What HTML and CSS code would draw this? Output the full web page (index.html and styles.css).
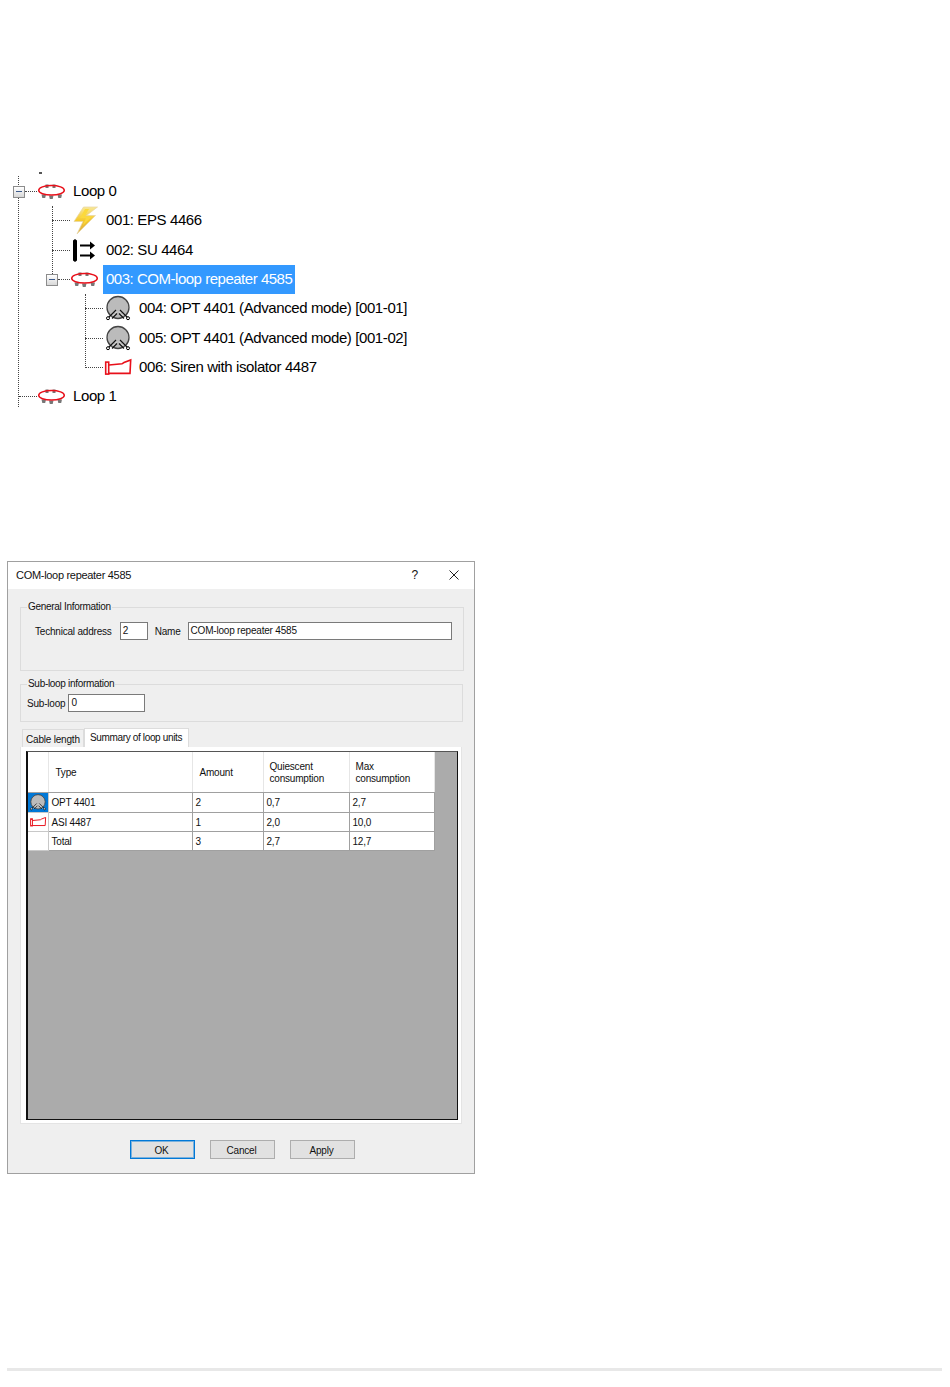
FILE: index.html
```html
<!DOCTYPE html>
<html lang="en">
	<head>
		<meta charset="UTF-8" />
		<title>COM-loop repeater 4585</title>
		<link rel="stylesheet" href="styles.css">
	</head>
	<body>
		<svg class="sprite" aria-hidden="true">
			<defs>
				<linearGradient id="bolt" x1="0" y1="0" x2="0" y2="1">
					<stop offset="0" stop-color="#f8e89a" />
					<stop offset="0.5" stop-color="#f5c92c" />
					<stop offset="1" stop-color="#d9a94e" />
				</linearGradient>
			</defs>
			<symbol id="icon-loop" viewBox="0 0 30 16">
				<g fill="#777">
					<rect x="8.5" y="1" width="3" height="3.5" />
					<rect x="15.5" y="1" width="3" height="3.5" />
					<path d="M4.5 11h4.5l-.8 3.5h-2.9zM12 12h4.5l-.8 3.5h-2.9zM20.5 11h4.5l-.8 3.5h-2.9z" />
				</g>
				<ellipse cx="14.5" cy="6.8" rx="12.8" ry="4.8" fill="none" stroke="#e8101a" stroke-width="1.5" />
			</symbol>
			<symbol id="icon-bolt" viewBox="0 0 30 29">
				<polygon points="27.5,1 13.5,1 4,15.5 13,15.5 7,28 25.5,9.5 16.5,9.5" fill="url(#bolt)" stroke="#e6d6a4" stroke-width="0.7" />
				<polygon points="15,3 10,12 16,12 13,19 22,10.5 14.5,10.5 19,3" fill="#fbd93c" />
			</symbol>
			<symbol id="icon-su" viewBox="0 0 30 29">
				<path d="M5 3l2 1.5v20l-2 1.5-2-1.5v-20z" fill="#000" />
				<path d="M10 9.5h11M10 19.5h11" stroke="#000" stroke-width="2" fill="none" />
				<path d="M20 5.5l5 4-5 4zM20 15.5l5 4-5 4z" fill="#000" />
			</symbol>
			<symbol id="icon-opt" viewBox="0 0 30 29">
				<circle cx="15" cy="13.5" r="11" fill="#bbb" stroke="#444" stroke-width="1.3" />
				<path d="M5.5 23.5l7.5-7.5M24.5 23.5l-7.5-7.5M9 24.5l5-5M21 24.5l-5-5" stroke="#111" stroke-width="1.1" fill="none" />
				<path d="M7.5 24l6.5-6.5M22.5 24l-6.5-6.5" stroke="#eee" stroke-width="0.8" stroke-dasharray="2 1.5" fill="none" />
				<circle cx="5" cy="24.2" r="1.5" fill="#fff" stroke="#000" />
				<circle cx="25" cy="24.2" r="1.5" fill="#fff" stroke="#000" />
			</symbol>
			<symbol id="icon-siren" viewBox="0 0 30 20">
				<rect x="2.7" y="4.6" width="3" height="12" fill="#fff" stroke="#e8101a" stroke-width="1.6" />
				<path d="M6 7.5l13-1.2 2-1.3 6.7-2.6-.7 13.5H6" fill="none" stroke="#e8101a" stroke-width="1.6" />
			</symbol>
		</svg>

		<div class="tree">
			<span class="speck"></span>
			<span class="branch branch-root"></span>
			<span class="branch branch-loop"></span>
			<span class="branch branch-sub"></span>
			<div class="row level-0">
				<span class="expander"></span><span class="twig"></span>
				<svg class="icon"><use href="#icon-loop" /></svg>
				<span class="label">Loop 0</span>
			</div>
			<div class="row level-1 leaf">
				<span class="twig"></span>
				<svg class="icon"><use href="#icon-bolt" /></svg>
				<span class="label">001: EPS 4466</span>
			</div>
			<div class="row level-1 leaf">
				<span class="twig"></span>
				<svg class="icon"><use href="#icon-su" /></svg>
				<span class="label">002: SU 4464</span>
			</div>
			<div class="row level-1">
				<span class="expander"></span><span class="twig"></span>
				<svg class="icon"><use href="#icon-loop" /></svg>
				<span class="label selected">003: COM-loop repeater 4585</span>
			</div>
			<div class="row level-2 leaf">
				<span class="twig"></span>
				<svg class="icon"><use href="#icon-opt" /></svg>
				<span class="label">004: OPT 4401 (Advanced mode) [001-01]</span>
			</div>
			<div class="row level-2 leaf">
				<span class="twig"></span>
				<svg class="icon"><use href="#icon-opt" /></svg>
				<span class="label">005: OPT 4401 (Advanced mode) [001-02]</span>
			</div>
			<div class="row level-2 leaf">
				<span class="twig"></span>
				<svg class="icon"><use href="#icon-siren" /></svg>
				<span class="label">006: Siren with isolator 4487</span>
			</div>
			<div class="row level-0 leaf">
				<span class="twig"></span>
				<svg class="icon"><use href="#icon-loop" /></svg>
				<span class="label">Loop 1</span>
			</div>
		</div>

		<div class="dialog">
			<div class="titlebar">
				<span class="title">COM-loop repeater 4585</span>
				<span class="help">?</span>
				<svg class="close" viewBox="0 0 10 10"><path d="M0.5 0.5l9 9M9.5 0.5l-9 9" stroke="#222" fill="none" /></svg>
			</div>
			<div class="dialog-body">
				<fieldset class="group group-general">
					<legend>General Information</legend>
					<div class="fields">
						<label>Technical address</label>
						<span class="input input-address">2</span>
						<label>Name</label>
						<span class="input input-name">COM-loop repeater 4585</span>
					</div>
				</fieldset>
				<fieldset class="group group-sub">
					<legend>Sub-loop information</legend>
					<div class="fields">
						<label>Sub-loop</label>
						<span class="input input-sub">0</span>
					</div>
				</fieldset>

				<div class="tabs">
					<span class="tab">Cable length</span>
					<span class="tab active">Summary of loop units</span>
				</div>
				<div class="panel">
					<div class="grid">
						<table>
							<colgroup>
								<col class="col-head">
								<col class="col-type">
								<col class="col-amount">
								<col class="col-value">
								<col class="col-max">
							</colgroup>
							<thead>
								<tr>
									<th></th>
									<th>Type</th>
									<th>Amount</th>
									<th>Quiescent<br>consumption</th>
									<th>Max<br>consumption</th>
								</tr>
							</thead>
							<tbody>
								<tr>
									<td class="rowhead current"><svg class="icon-opt"><use href="#icon-opt" /></svg></td>
									<td>OPT 4401</td><td>2</td><td>0,7</td><td>2,7</td>
								</tr>
								<tr>
									<td class="rowhead"><svg class="icon-siren"><use href="#icon-siren" /></svg></td>
									<td>ASI 4487</td><td>1</td><td>2,0</td><td>10,0</td>
								</tr>
								<tr>
									<td class="rowhead"></td>
									<td>Total</td><td>3</td><td>2,7</td><td>12,7</td>
								</tr>
							</tbody>
						</table>
					</div>
				</div>

				<div class="buttons">
					<button class="default">OK</button>
					<button>Cancel</button>
					<button>Apply</button>
				</div>
			</div>
		</div>

		<div class="page-rule"></div>
	</body>
</html>
```

FILE: styles.css
```css
* {
	box-sizing: border-box;
	margin: 0;
	padding: 0;
}
body {
	background-color: #fff;
	color: #111;
	font-family: "Liberation Sans", Arial, sans-serif;
	width: 950px;
	height: 1387px;
	overflow: hidden;
	padding-top: 177px;
}
.sprite {
	position: absolute;
	width: 0;
	height: 0;
}

/* tree */
.tree {
	position: relative;
	height: 235px;
	font-size: 15px;
	letter-spacing: -0.4px;
	color: #000;
}
.speck {
	position: absolute;
	left: 39px;
	top: -5px;
	width: 3px;
	height: 2px;
	background-color: #555;
}
.branch {
	position: absolute;
	border-left: 1px dotted #444;
}
.branch-root {
	left: 18px;
	top: -1px;
	height: 231px;
}
.branch-loop {
	left: 52px;
	top: 29px;
	height: 74px;
}
.branch-sub {
	left: 85px;
	top: 117px;
	height: 74px;
}
.row {
	position: relative;
	display: flex;
	align-items: center;
	height: 29.33px;
}
.level-0 {
	padding-left: 13px;
}
.level-1 {
	padding-left: 46px;
}
.level-2 {
	padding-left: 79px;
}
.expander {
	width: 12px;
	height: 12px;
	border: 1px solid #8c8c8c;
	background: linear-gradient(#fff, #d8d8d8);
	position: relative;
	flex: none;
}
.expander::after {
	content: "";
	position: absolute;
	left: 2px;
	top: 4px;
	width: 6px;
	height: 1px;
	background-color: #3c5a8c;
}
.twig {
	width: 12px;
	border-top: 1px dotted #444;
	flex: none;
}
.leaf .twig {
	margin-left: 6px;
	width: 18px;
}
.icon {
	width: 30px;
	height: 29px;
	flex: none;
}
.label {
	margin-left: 3px;
	padding: 0 3px 2px;
	line-height: 27px;
	white-space: nowrap;
}
.selected {
	background-color: #3399ff;
	color: #fff;
	width: 192px;
	letter-spacing: -0.48px;
}

/* dialog */
.dialog {
	width: 468px;
	height: 613px;
	margin-top: 149px;
	margin-left: 7px;
	border: 1px solid #a0a0a0;
	background-color: #efefef;
	font-size: 10px;
	letter-spacing: -0.2px;
	display: flex;
	flex-direction: column;
}
.titlebar {
	height: 27px;
	background-color: #fff;
	display: flex;
	align-items: center;
	padding-left: 8px;
	padding-bottom: 2px;
}
.title {
	font-size: 11px;
	letter-spacing: -0.3px;
	flex: 1;
}
.help {
	font-size: 12px;
	margin-right: 31px;
}
.close {
	width: 10px;
	height: 10px;
	margin-right: 15px;
}
.dialog-body {
	padding: 11px 10px 0 12px;
	flex: 1;
}
.group {
	border: 1px solid #dcdcdc;
	padding-left: 14px;
	margin-right: 0;
}
.group legend {
	padding: 0 1px;
	line-height: 14px;
	font-size: 10px;
	letter-spacing: -0.3px;
}
.group-general {
	height: 71px;
	padding-top: 8px;
}
.group-general legend {
	margin-left: -8px;
}
.group-sub {
	height: 45px;
	margin-top: 6px;
	margin-right: 1px;
	padding-top: 3px;
	padding-left: 6px;
}
.group-sub legend {
	margin-left: 0;
}
.fields {
	display: flex;
	align-items: center;
	gap: 3px;
}
.input {
	height: 18px;
	line-height: 16px;
	border: 1px solid #7a7a7a;
	background-color: #fff;
	padding-left: 2px;
	color: #111;
}
.input-address {
	width: 28px;
	margin-left: 5px;
	margin-right: 4px;
}
.input-name {
	width: 264px;
	margin-left: 4px;
}
.input-sub {
	width: 77px;
}

/* tabs */
.tabs {
	display: flex;
	align-items: flex-end;
	height: 19px;
	margin-top: 6px;
	padding-left: 2px;
}
.tab {
	height: 18px;
	line-height: 19px;
	padding: 0 3px;
	border: 1px solid #dcdcdc;
	border-bottom: 0;
	background-color: #f0f0f0;
	white-space: nowrap;
	width: 62px;
}
.tab.active {
	height: 19px;
	background-color: #fff;
	width: 105px;
	padding: 0 5px;
	line-height: 17px;
	letter-spacing: -0.35px;
}
.panel {
	width: 442px;
	height: 377px;
	background-color: #fff;
	border: 1px solid #e4e4e4;
	border-top: 0;
	padding: 4px 3px 3px 5px;
}
.grid {
	width: 432px;
	height: 369px;
	background-color: #ababab;
	border: 1px solid #111;
	border-left-width: 2px;
	border-top-color: #555;
}
table {
	border-collapse: collapse;
	table-layout: fixed;
	width: 406px;
	background-color: #fff;
}
.col-head {
	width: 20px;
}
.col-type {
	width: 144px;
}
.col-amount {
	width: 71px;
}
.col-value {
	width: 86px;
}
.col-max {
	width: 85px;
}
th {
	height: 40px;
	font-weight: normal;
	text-align: left;
	padding-left: 6px;
	padding-top: 2px;
	line-height: 12px;
	border-right: 1px solid #e6e6e6;
	border-bottom: 1px solid #a0a0a0;
}
th:nth-child(-n+3) {
	padding-left: 7px;
}
td {
	height: 19.3px;
	padding-left: 3px;
	padding-top: 1px;
	border-right: 1px solid #a0a0a0;
	border-bottom: 1px solid #a0a0a0;
	white-space: nowrap;
}
.rowhead {
	padding: 0;
	border-right-color: #c8c8c8;
	border-bottom-color: #c8c8c8;
	text-align: center;
	line-height: 0;
}
.current {
	background-color: #0078d7;
}
.icon-opt {
	width: 20px;
	height: 19px;
}
.icon-siren {
	width: 18px;
	height: 12px;
}

/* buttons */
.buttons {
	display: flex;
	gap: 15px;
	margin-top: 16px;
	padding-left: 110px;
}
button {
	width: 65px;
	height: 19px;
	padding-top: 2px;
	padding-right: 2px;
	background-color: #e1e1e1;
	border: 1px solid #adadad;
	font-family: inherit;
	font-size: 10px;
	letter-spacing: -0.2px;
	color: #111;
}
button.default {
	border-color: #0078d7;
	box-shadow: inset 0 0 0 1px rgba(0, 120, 215, 0.45);
}

.page-rule {
	height: 3px;
	margin: 194px 8px 0 7px;
	background-color: #e8e8e8;
}
```
